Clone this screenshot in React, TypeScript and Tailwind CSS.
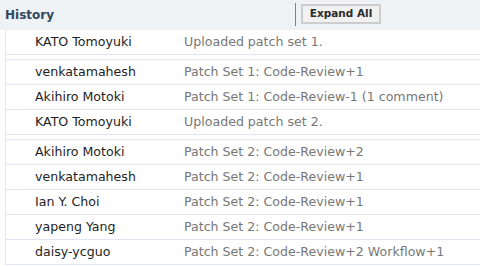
import React from "react";

const groups: [string, string][][] = [
  [["KATO Tomoyuki", "Uploaded patch set 1."]],
  [
    ["venkatamahesh", "Patch Set 1: Code-Review+1"],
    ["Akihiro Motoki", "Patch Set 1: Code-Review-1 (1 comment)"],
    ["KATO Tomoyuki", "Uploaded patch set 2."],
  ],
  [
    ["Akihiro Motoki", "Patch Set 2: Code-Review+2"],
    ["venkatamahesh", "Patch Set 2: Code-Review+1"],
    ["Ian Y. Choi", "Patch Set 2: Code-Review+1"],
    ["yapeng Yang", "Patch Set 2: Code-Review+1"],
    ["daisy-ycguo", "Patch Set 2: Code-Review+2 Workflow+1"],
  ],
];

export default function App() {
  return (
    <div
      className="w-[480px] h-[266px] overflow-hidden bg-white"
      style={{ fontFamily: '"DejaVu Sans", Verdana, sans-serif' }}
    >
      <div className="h-[30px] bg-[#eef2f5] flex items-center">
        <div className="w-[295px] pl-[5px] text-[12px] font-bold text-[#2f4760]">History</div>
        <div className="w-px h-[23px] bg-[#808080] mt-[-2px]" />
        <div className="ml-[5px] w-[80px] h-[20px] mt-[-3px] border-2 border-[#cdcdcd] bg-[#f1f1f1] flex items-center justify-center text-[10.5px] font-bold text-[#2b2b2b]">
          Expand All
        </div>
      </div>
      <div className="ml-[5px] border-l border-[#e3e7f4] flex flex-col">
        {groups.map((g, gi) => (
          <div key={gi} className={gi > 0 ? "mt-[4px] border-t border-[#dfe4f7]" : ""}>
            {g.map(([name, msg], ri) => (
              <div key={ri} className="h-[25px] border-b border-[#dfe4f7] flex items-center text-[12.6px]">
                <div className="w-[178px] pl-[29px] text-[#1e1e1e] whitespace-nowrap">{name}</div>
                <div className="text-[#777777] whitespace-nowrap">{msg}</div>
              </div>
            ))}
          </div>
        ))}
      </div>
    </div>
  );
}
